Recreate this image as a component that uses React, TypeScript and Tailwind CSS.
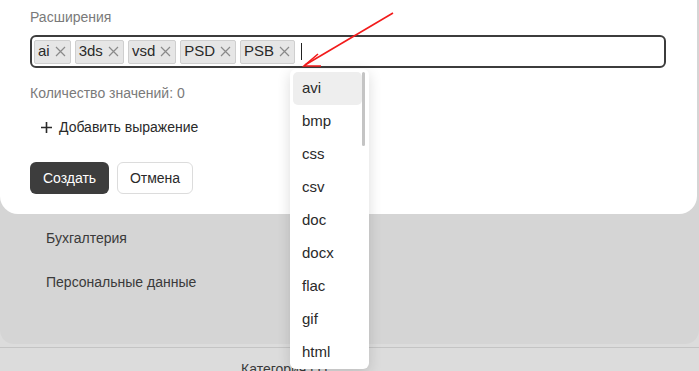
import React from 'react';

const chips = ['ai', '3ds', 'vsd', 'PSD', 'PSB'];
const options = ['avi', 'bmp', 'css', 'csv', 'doc', 'docx', 'flac', 'gif', 'html'];

const CloseIcon: React.FC = () => (
  <svg width="11" height="11" viewBox="0 0 11 11" className="ml-[5px]">
    <path d="M1 1l9 9M10 1l-9 9" stroke="#8a8a8a" strokeWidth="1.2" fill="none" />
  </svg>
);

const App: React.FC = () => {
  return (
    <div className="relative w-[699px] h-[371px] overflow-hidden bg-[#dcdcdc] font-['Liberation_Sans',Arial,sans-serif]">
      {/* background page */}
      <div className="h-[344px] rounded-b-[14px] bg-[#d5d5d5] pt-[228px] pl-[46px] text-[14px] text-[#3a3a3a]">
        <div className="h-[44px] leading-[20px]">Бухгалтерия</div>
        <div className="leading-[20px]">Персональные данные</div>
      </div>
      <div className="mt-[3px] border-t border-[#c4c4c4] pl-[241px] pt-[13px] text-[14px] leading-[16px] text-[#3a3a3a]">
        Категория (1)
      </div>

      {/* modal */}
      <div className="absolute left-0 top-0 w-[697px] h-[214px] rounded-b-[18px] bg-white px-[30px] pt-[8px]">
        <div className="text-[14px] leading-[18px] text-[#7a7a7a]">Расширения</div>
        <div className="mt-[9px] flex h-[33px] w-[636px] items-center gap-[4px] rounded-[6px] border-2 border-[#3c3c3c] px-[2px]">
          {chips.map((c) => (
            <div
              key={c}
              className="flex h-[24px] items-center rounded-[2px] border border-[#cfcfcf] bg-[#e6e6e6] pl-[3px] pr-[4px] text-[15px] text-[#2a2a2a]"
            >
              <span>{c}</span>
              <CloseIcon />
            </div>
          ))}
          <div className="ml-[2px] h-[17px] w-px bg-[#222]" />
        </div>
        <div className="mt-[16px] text-[14px] leading-[18px] text-[#7a7a7a]">Количество значений: 0</div>
        <div className="mt-[16px] flex items-center pl-[10px] text-[14px] text-[#2a2a2a]">
          <svg width="13" height="13" viewBox="0 0 13 13" className="mr-[6px]">
            <path d="M6.5 1v11M1 6.5h11" stroke="#2a2a2a" strokeWidth="1.6" fill="none" />
          </svg>
          <span className="leading-[18px]">Добавить выражение</span>
        </div>
        <div className="mt-[26px] flex gap-[8px]">
          <button className="h-[32px] w-[79px] rounded-[6px] bg-[#3d3d3d] text-[14px] text-white">Создать</button>
          <button className="h-[32px] w-[76px] rounded-[6px] border border-[#dcdcdc] bg-white text-[14px] text-[#2a2a2a]">Отмена</button>
        </div>
      </div>

      {/* dropdown */}
      <div className="absolute left-[290px] top-[69px] h-[300px] w-[79px] overflow-hidden rounded-[6px] bg-white p-[3px] pr-[7px] shadow-[0_4px_14px_rgba(0,0,0,0.14)]">
        {options.map((o, i) => (
          <div
            key={o}
            className={`flex h-[33px] items-center rounded-[5px] pl-[9px] text-[15px] text-[#2a2a2a] ${i === 0 ? 'bg-[#eeeeee]' : ''}`}
          >
            {o}
          </div>
        ))}
        <div className="absolute right-[4px] top-[3px] h-[74px] w-[3px] rounded-full bg-[#c4c4c4]" />
      </div>

      {/* annotation arrow */}
      <svg className="absolute left-0 top-0" width="699" height="371">
        <path d="M393 13L305 65" stroke="#f21b1b" strokeWidth="1.6" fill="none" />
        <path d="M318 54L304 66L321 66" stroke="#f21b1b" strokeWidth="1.6" fill="none" />
      </svg>
    </div>
  );
};

export default App;
